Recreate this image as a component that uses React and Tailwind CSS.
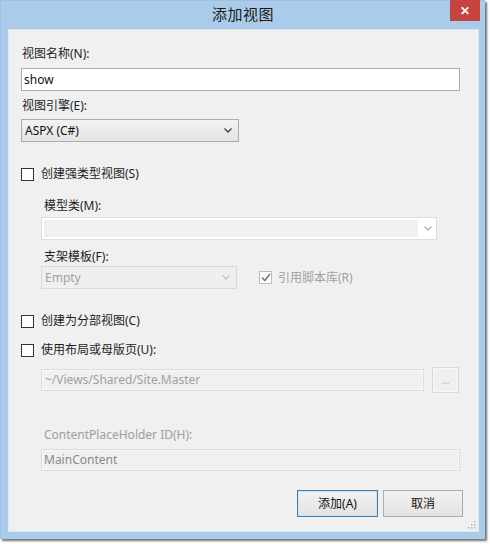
import React from 'react';

const font = { fontFamily: '"Noto Sans", "Noto Sans CJK SC", sans-serif' };

function Chevron({ color = '#555' }) {
  return (
    <svg width="8" height="5" viewBox="0 0 8 5" className="block">
      <path d="M0.5 0.5 L4 4 L7.5 0.5" fill="none" stroke={color} strokeWidth="1.3" />
    </svg>
  );
}

function CheckBox({ checked, disabled }) {
  return (
    <span
      className={`w-[13px] h-[13px] flex items-center justify-center border bg-white ${
        disabled ? 'border-[#bcbcbc]' : 'border-[#333333]'
      }`}
    >
      {checked && (
        <svg width="10" height="9" viewBox="0 0 10 9">
          <path d="M1 4.5 L3.8 7.5 L9 1" fill="none" stroke="#7a7a7a" strokeWidth="1.6" />
        </svg>
      )}
    </span>
  );
}

function Label({ children, indent, disabled, className = '' }) {
  return (
    <div
      className={`h-4 leading-4 text-[12px] ${indent ? 'pl-[23px]' : 'pl-px'} ${
        disabled ? 'text-[#9d9d9d]' : 'text-[#1e1e1e]'
      } ${className}`}
    >
      {children}
    </div>
  );
}

function CheckRow({ label, className = '' }) {
  return (
    <div className={`h-4 flex items-center gap-[7px] text-[12px] text-[#1e1e1e] ${className}`}>
      <CheckBox />
      <span>{label}</span>
    </div>
  );
}

export default function App() {
  return (
    <div className="w-[490px] h-[544px] bg-white" style={font}>
      <div className="w-[485px] h-[539px] bg-[#aacbe9] border-l border-t border-[#9fc0de] shadow-[2px_2px_2px_rgba(0,0,0,0.55)] flex flex-col">
        {/* title bar */}
        <div className="h-[28px] relative flex items-center justify-center">
          <span className="text-[15px] text-[#1b1b1b] tracking-[0.5px] -mt-[2px]">添加视图</span>
          <div className="absolute right-[5px] top-[-1px] w-[30px] h-[21px] bg-[#c7433f] flex items-center justify-center text-white text-[12px] font-bold">
            ✕
          </div>
        </div>

        {/* content */}
        <div className="ml-[7px] mr-[6px] h-[503px] bg-[#f0f0f0] border border-[#dbe8f4] pt-[16px] pl-[12px] pr-[18px] flex flex-col relative">
          <Label>视图名称(N):</Label>
          <div className="mt-[6px] h-[23px] bg-white border border-[#adadad] flex items-center px-[2px] text-[12px] text-[#111]">
            show
          </div>

          <Label className="mt-[7px]">视图引擎(E):</Label>
          <div className="mt-[5px] w-[218px] h-[23px] border border-[#acacac] bg-gradient-to-b from-[#f3f3f3] to-[#e4e4e4] flex items-center justify-between pl-[3px] pr-[6px] text-[12px] text-[#111]">
            <span>ASPX (C#)</span>
            <Chevron color="#404040" />
          </div>

          <CheckRow label="创建强类型视图(S)" className="mt-[24px]" />

          <Label indent className="mt-[16px]">模型类(M):</Label>
          <div className="mt-[3px] ml-[20px] h-[23px] w-[396px] border border-[#dedede] bg-white flex">
            <div className="flex-1 m-[2px] bg-[#f0f0f0]"></div>
            <div className="w-[16px] flex items-center justify-center">
              <Chevron color="#b0b0b0" />
            </div>
          </div>

          <Label indent className="mt-[9px]">支架模板(F):</Label>
          <div className="mt-px ml-[20px] flex items-center">
            <div className="w-[196px] h-[23px] border border-[#d9d9d9] bg-[#efefef] flex items-center justify-between pl-[3px] pr-[6px] text-[12px] text-[#a3a3a3]">
              <span>Empty</span>
              <Chevron color="#c4c4c4" />
            </div>
            <div className="ml-[22px] flex items-center gap-[6px] text-[12px] text-[#a0a0a0]">
              <CheckBox checked disabled />
              <span>引用脚本库(R)</span>
            </div>
          </div>

          <CheckRow label="创建为分部视图(C)" className="mt-[24px]" />
          <CheckRow label="使用布局或母版页(U):" className="mt-[13px]" />

          <div className="mt-[9px] ml-[20px] flex items-center gap-[8px]">
            <div className="w-[383px] h-[22px] border border-[#dcdcdc] bg-[#f0f0f0] shadow-[inset_0_0_0_1px_#f8f8f8] flex items-center px-[3px] text-[12px] text-[#a0a0a0]">
              ~/Views/Shared/Site.Master
            </div>
            <div className="w-[27px] h-[26px] border border-[#d9d9d9] bg-[#f0f0f0] shadow-[inset_0_0_0_1px_#f8f8f8] flex items-center justify-center text-[10px] text-[#b5b5b5]">
              ...
            </div>
          </div>

          <Label indent disabled className="mt-[34px]">ContentPlaceHolder ID(H):</Label>
          <div className="mt-[6px] ml-[20px] h-[22px] border border-[#dcdcdc] bg-[#f0f0f0] shadow-[inset_0_0_0_1px_#f8f8f8] flex items-center px-[2px] text-[12px] text-[#8a8a8a]">
            MainContent
          </div>

          <div className="mt-[19px] flex justify-end gap-[5px] -mr-[3px]">
            <div className="w-[81px] h-[27px] border border-[#3c7fb1] bg-gradient-to-b from-[#f2f2f2] to-[#e3e3e3] shadow-[inset_0_0_0_1px_#cfe3f4] flex items-center justify-center text-[12px] text-[#111]">
              添加(A)
            </div>
            <div className="w-[80px] h-[27px] border border-[#acacac] bg-gradient-to-b from-[#f2f2f2] to-[#e3e3e3] flex items-center justify-center text-[12px] text-[#111]">
              取消
            </div>
          </div>

          <svg width="10" height="10" viewBox="0 0 10 10" className="absolute right-[2px] bottom-[2px]">
            <rect x="8" y="2" width="1.5" height="1.5" fill="#b8b8b8" />
            <rect x="5" y="5" width="1.5" height="1.5" fill="#b8b8b8" />
            <rect x="8" y="5" width="1.5" height="1.5" fill="#b8b8b8" />
            <rect x="2" y="8" width="1.5" height="1.5" fill="#b8b8b8" />
            <rect x="5" y="8" width="1.5" height="1.5" fill="#b8b8b8" />
            <rect x="8" y="8" width="1.5" height="1.5" fill="#b8b8b8" />
          </svg>
        </div>
      </div>
    </div>
  );
}
